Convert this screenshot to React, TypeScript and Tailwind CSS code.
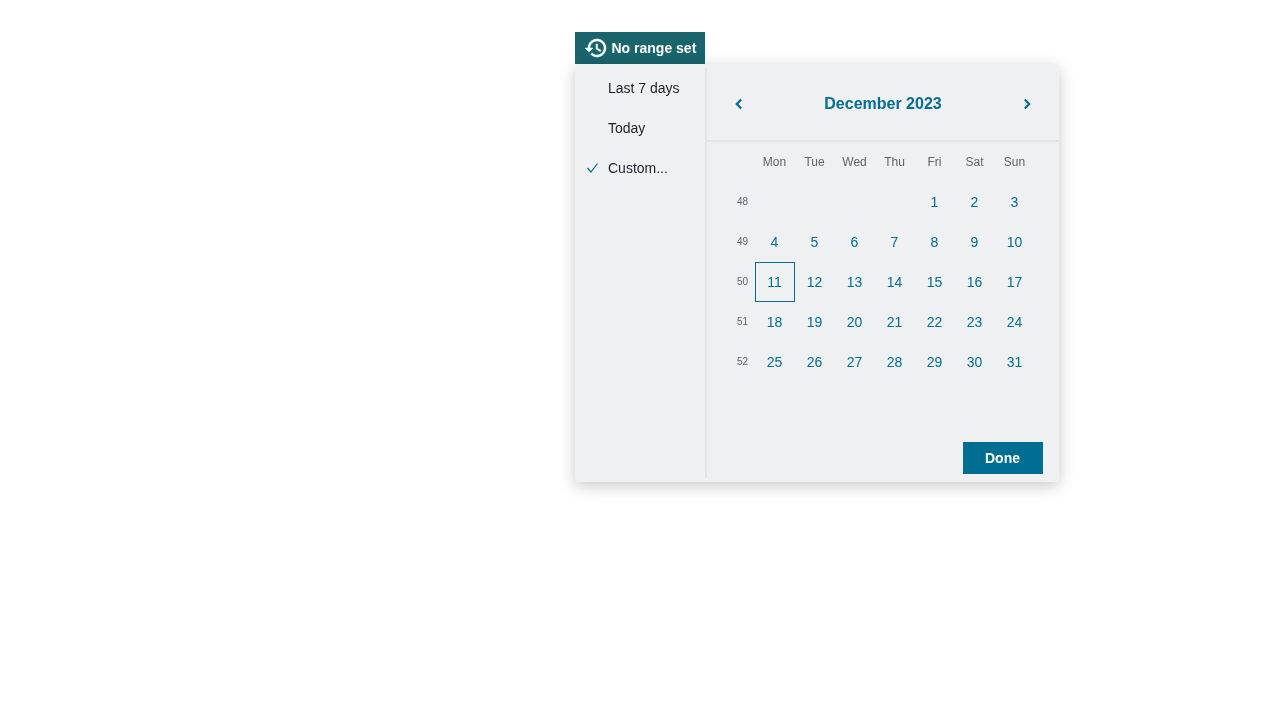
const weekdays = ['Mon', 'Tue', 'Wed', 'Thu', 'Fri', 'Sat', 'Sun']

const weeks: { week: number; days: (number | null)[] }[] = [
  { week: 48, days: [null, null, null, null, 1, 2, 3] },
  { week: 49, days: [4, 5, 6, 7, 8, 9, 10] },
  { week: 50, days: [11, 12, 13, 14, 15, 16, 17] },
  { week: 51, days: [18, 19, 20, 21, 22, 23, 24] },
  { week: 52, days: [25, 26, 27, 28, 29, 30, 31] },
]

function HistoryIcon() {
  return (
    <svg width="24" height="24" viewBox="0 0 24 24" fill="currentColor" stroke="currentColor" strokeWidth="0.5" className="shrink-0">
      <path d="M13 3c-4.970 0-9 4.030-9 9H1l3.890 3.890.07.140L9 12H6c0-3.870 3.130-7 7-7s7 3.130 7 7-3.130 7-7 7c-1.930 0-3.680-.79-4.940-2.060l-1.420 1.420C8.270 19.990 10.510 21 13 21c4.970 0 9-4.030 9-9s-4.030-9-9-9zm-1 5v5l4.280 2.540.72-1.210-3.500-2.080V8H12z" />
    </svg>
  )
}

function Chevron({ right }: { right?: boolean }) {
  return (
    <svg width="12" height="14" viewBox="0 0 12 14" fill="none" stroke="#006e93" strokeWidth="2.200">
      <path d={right ? 'M3.800 2.500 8.200 7l-4.400 4.500' : 'M8.200 2.500 3.800 7l4.400 4.500'} />
    </svg>
  )
}

export default function App() {
  return (
    <div className="min-h-[720px] bg-white pt-8 pl-[575px] font-['Liberation_Sans',Arial,sans-serif] text-sm">
      {/* Trigger */}
      <button className="flex h-8 w-[130px] items-center gap-[3.5px] bg-[#1a646c] pl-[9px] text-sm font-bold whitespace-nowrap text-white will-change-transform">
        <HistoryIcon />
        No range set
      </button>

      {/* Popover */}
      <div className="flex h-[418px] w-[484px] rounded-[4px] bg-[#eff0f2] pt-1 shadow-[0_4px_16px_rgba(0,0,0,0.22)] will-change-transform">
        <div className="mb-1 w-[132px] shrink-0 border-r-2 border-[#e3e4e7]">
          {['Last 7 days', 'Today', 'Custom...'].map((label, i) => (
            <div key={label} className="flex h-10 items-center pl-3 text-[#1c2128]">
              <span className="w-[21px] shrink-0">
                {i === 2 && (
                  <svg width="11" height="10" viewBox="0 0 11 10" fill="none" stroke="#006e93" strokeWidth="1.200" className="block">
                    <path d="M0.500 5 4 9 10.500 0.500" />
                  </svg>
                )}
              </span>
              {label}
            </div>
          ))}
        </div>

        <div className="flex min-w-0 flex-1 flex-col pb-2">
          <div className="flex h-[74px] shrink-0 items-center justify-between border-b-2 border-[#e3e4e7] px-[26px]">
            <Chevron />
            <div className="text-base font-bold text-[#006e93]">December 2023</div>
            <Chevron right />
          </div>

          <div className="pl-[48px]">
            <div className="flex h-10 items-center text-xs text-[#5f6367]">
              {weekdays.map(d => (
                <div key={d} className="w-10 pr-[1px] text-center">{d}</div>
              ))}
            </div>
            {weeks.map(row => (
              <div key={row.week} className="relative flex h-10 items-center">
                <div className="absolute top-0 left-[-21px] flex h-10 w-[17px] items-center justify-center text-[10px] text-[#5f6367]">
                  {row.week}
                </div>
                {row.days.map((day, i) => (
                  <div
                    key={i}
                    className={`flex h-10 w-10 items-center justify-center pr-[1px] text-[#006e93] ${day === 11 ? 'border border-[#006e93]' : ''}`}
                  >
                    {day}
                  </div>
                ))}
              </div>
            ))}
          </div>

          <div className="mt-auto flex justify-end pr-4">
            <button className="h-8 w-20 bg-[#006e93] pr-[1px] text-sm font-bold text-white">Done</button>
          </div>
        </div>
      </div>
    </div>
  )
}
